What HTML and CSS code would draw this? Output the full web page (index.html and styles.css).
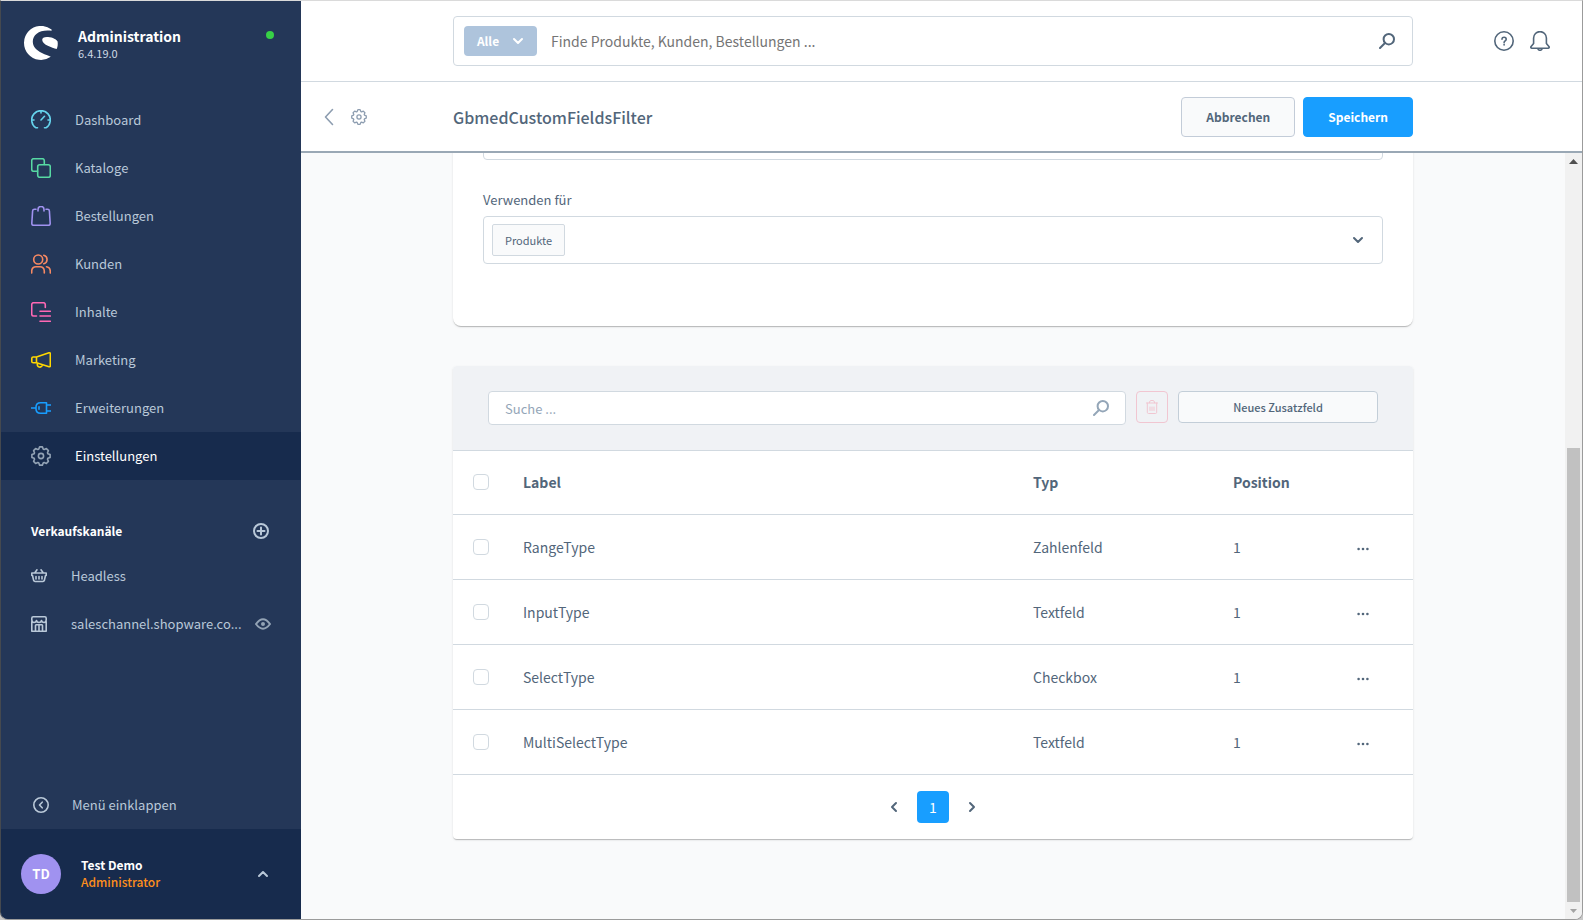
FILE: index.html
```html
<!DOCTYPE html>
<html lang="de">
<head>
<meta charset="utf-8">
<title>GbmedCustomFieldsFilter | Administration</title>
<link rel="stylesheet" href="styles.css">
</head>
<body>
<svg class="sprite" aria-hidden="true">
  <symbol id="gear" viewBox="0 0 20 20"><path d="M19.1 8.6V11.4L16.8 12.3 16.5 13.2 17.4 15.4 15.4 17.4 13.2 16.5 12.3 16.8 11.4 19.1H8.6L7.7 16.8 6.8 16.5 4.6 17.4 2.6 15.4 3.5 13.2 3.2 12.3.9 11.4V8.6L3.2 7.7 3.5 6.8 2.6 4.6 4.6 2.6 6.8 3.5 7.7 3.2 8.6.9H11.4L12.3 3.2 13.2 3.5 15.4 2.6 17.4 4.6 16.5 6.8 16.8 7.7Z"/><circle cx="10" cy="10" r="2.6"/></symbol>
  <symbol id="search" viewBox="0 0 16 16"><circle cx="9.8" cy="6.2" r="5.2"/><path d="M6 10 1 15"/></symbol>
  <symbol id="down" viewBox="0 0 12 8"><path d="M2 2 6 6 10 2"/></symbol>
  <symbol id="dots" viewBox="0 0 12 4"><circle cx="1.6" cy="2" r="1.3"/><circle cx="6" cy="2" r="1.3"/><circle cx="10.4" cy="2" r="1.3"/></symbol>
</svg>
<div class="window">
  <aside class="sidebar">
    <header class="brand">
      <svg class="logo" viewBox="0 0 34 34"><path d="M27.6 3.6A17 17 0 1 0 26.8 30.8C22 28.4 8.8 25.500 8.800 15.500C8.800 8.500 16 3.200 27.600 4.800Z"/><path d="M18.200 14C18 11.800 20.500 10.700 24 11C29 11.400 32.500 13.500 33.600 15.500C34 18 33.700 21 32.700 23C28 21.500 18.600 19 18.200 14Z"/></svg>
      <div class="brand-text"><strong>Administration</strong><span>6.4.19.0</span></div>
      <i class="status"></i>
    </header>
    <nav class="menu">
      <a href="#"><svg class="icon cyan" viewBox="0 0 20 20"><path d="M6.500 17.800H5A9.300 9.300 0 1 1 15 17.800H13.500M10 .7V3M.7 10H3M17 10H19.300M10 10 13.500 6.300"/></svg>Dashboard</a>
      <a href="#"><svg class="icon green" viewBox="0 0 20 20"><rect x="6.700" y="6.700" width="12.600" height="12.600" rx="2"/><path d="M6.500 13.300H2.700a2 2 0 0 1-2-2V2.700a2 2 0 0 1 2-2H11.300a2 2 0 0 1 2 2V6.500"/></svg>Kataloge</a>
      <a href="#"><svg class="icon violet" viewBox="0 0 20 20"><path d="M7 5V3.500a3 3 0 0 1 6 0V5M5 3.300H3.500Q1.700 3.300 1.600 5L.8 17.500Q.8 19.300 2.600 19.300H17.400Q19.200 19.300 19.200 17.500L18.400 5Q18.300 3.300 16.500 3.300H15"/></svg>Bestellungen</a>
      <a href="#"><svg class="icon orange" viewBox="0 0 20 20"><circle cx="7.200" cy="5.500" r="4.500"/><path d="M12.800 1.200A4.400 4.400 0 0 1 12.800 9.700M.7 19V17Q1 12.700 5 12.700H9Q13 12.700 13.300 17V19M15.500 12.700Q19 13.200 19.300 17V19"/></svg>Kunden</a>
      <a href="#"><svg class="icon pink" viewBox="0 0 20 20"><path d="M5.500 14H2.700a2 2 0 0 1-2-2V2.700a2 2 0 0 1 2-2H12.300a2 2 0 0 1 2 2V5.500M9 9.200H19.300M9 14H19.300M9 19.200H19.300"/></svg>Inhalte</a>
      <a href="#"><svg class="icon yellow" viewBox="0 0 20 20"><path d="M5.500 7 18 2.800Q19.300 2.500 19.300 3.800V15.800Q19.300 17 18 16.700L5.500 12.800ZM5.500 7H2.200Q.8 7 .8 8.300V11.500Q.8 12.800 2.200 12.800H5.500M6.500 13.200C5.300 17.500 10.500 18.500 11.500 14.800"/></svg>Marketing</a>
      <a href="#"><svg class="icon blue" viewBox="0 0 20 20"><path d="M.5 10H5M9.500 4.700H15.500V15.300H9.500Q5 15.300 5 10.800V9.200Q5 4.700 9.500 4.700ZM15.500 7H19.500M15.500 13H19.500M8 8.700V11.300"/></svg>Erweiterungen</a>
      <a href="#" class="active"><svg class="icon steel"><use href="#gear"/></svg>Einstellungen</a>
    </nav>
    <section class="channels">
      <div class="channels-head"><h2>Verkaufskanäle</h2>
        <button type="button" aria-label="Verkaufskanal hinzufügen"><svg class="icon-sm bold" viewBox="0 0 16 16"><circle cx="8" cy="8" r="7"/><path d="M8 4.500V11.500M4.500 8H11.500"/></svg></button></div>
      <a href="#"><svg class="icon-sm" viewBox="0 0 16 16"><path d="M.8 5H15.200V7.500H14.500L13.300 12.600Q13 13.500 12 13.500H4Q3 13.500 2.700 12.600L1.500 7.500H.8ZM4 4.500 6 1.800M12 4.500 10 1.800M5 8.500V11M8 8.500V11M11 8.500V11"/></svg><span>Headless</span></a>
      <a href="#"><svg class="icon-sm" viewBox="0 0 16 16"><path d="M.8 4V2.200Q.8.8 2.200.8H13.800Q15.200.8 15.200 2.200V4Q15 6.500 13 6.500 11 6.500 10.500 4.500 10 6.500 8 6.500 6 6.500 5.500 4.500 5 6.500 3 6.500 1 6.500.8 4ZM.8 5.500V15.200H15.200V5.500M4.500 15V9.500Q4.500 8.800 5.200 8.800H10.800Q11.500 8.800 11.500 9.500V15M8 9V15"/></svg><span>saleschannel.shopware.co...</span><svg class="eye" viewBox="0 0 16 12"><path d="M1 6Q8-3.500 15 6Q8 15.500 1 6Z"/><circle cx="8" cy="6" r="1"/></svg></a>
    </section>
    <button type="button" class="collapse"><svg class="icon-sm" viewBox="0 0 16 16"><circle cx="8" cy="8" r="7.200"/><path d="M9.200 5.200 6.500 8 9.200 10.800"/></svg>Menü einklappen</button>
    <footer class="user">
      <span class="avatar">TD</span>
      <div class="user-text"><strong>Test Demo</strong><span>Administrator</span></div>
      <button type="button" aria-label="Benutzermenü"><svg class="chev" viewBox="0 0 12 8"><path d="M2 6 6 2 10 6"/></svg></button>
    </footer>
  </aside>

  <main class="main">
    <header class="topbar">
      <form class="global-search" role="search">
        <button type="button" class="scope">Alle <svg class="chev"><use href="#down"/></svg></button>
        <input type="text" aria-label="Suche" placeholder="Finde Produkte, Kunden, Bestellungen ...">
        <svg class="mag"><use href="#search"/></svg>
      </form>
      <div class="top-actions">
        <button type="button" aria-label="Hilfe"><svg class="icon" viewBox="0 0 20 20"><circle cx="10" cy="10" r="9.200"/><path d="M8 8.200C8 5.500 12.200 5.700 12.200 8.200 12.200 9.900 10.100 9.700 10.100 11.500M10.100 13.400V14"/></svg></button>
        <button type="button" aria-label="Benachrichtigungen"><svg class="icon" viewBox="0 0 20 20"><path d="M3.600 12.500V7A6.400 6.400 0 0 1 16.400 7V12.500L18.900 15.500Q19.800 17 18 17.300H2Q.2 17 1.100 15.500ZM7.800 17.500Q8 19.300 10 19.300 12 19.300 12.200 17.500"/></svg></button>
      </div>
    </header>
    <div class="smartbar">
      <div class="back">
        <a href="#" aria-label="Zurück"><svg class="back-arrow" viewBox="0 0 10 18"><path d="M8.500 1.500 1.500 9 8.500 16.500"/></svg></a>
        <svg class="icon-sm"><use href="#gear"/></svg>
      </div>
      <div class="smartbar-body">
        <h1>GbmedCustomFieldsFilter</h1>
        <button type="button" class="btn">Abbrechen</button>
        <button type="button" class="btn primary">Speichern</button>
      </div>
    </div>
    <div class="scroll">
      <div class="view">
        <div class="content">
          <section class="card form-card">
            <input type="text" class="field" aria-label="Label">
            <label for="entity">Verwenden für</label>
            <div class="field multi">
              <button type="button" class="tag">Produkte</button>
              <input type="text" id="entity">
              <svg class="chev"><use href="#down"/></svg>
            </div>
          </section>
          <section class="card list-card">
            <div class="toolbar">
              <div class="list-search"><input type="text" aria-label="Zusatzfeld suchen" placeholder="Suche ..."><svg class="mag"><use href="#search"/></svg></div>
              <button type="button" class="trash" aria-label="Löschen"><svg viewBox="0 0 12 14"><path d="M.5 3H11.500M1.300 3V12.300Q1.300 13.500 2.500 13.500H9.500Q10.700 13.500 10.700 12.300V3M3.300 2.800Q3.500.5 5 .5H7Q8.500.5 8.700 2.800M4 7V10.500M6 7V10.500M8 7V10.500"/></svg></button>
              <button type="button" class="new-field">Neues Zusatzfeld</button>
            </div>
            <table>
              <thead><tr><th class="check"><input type="checkbox" aria-label="Alle auswählen"></th><th>Label</th><th class="type">Typ</th><th class="pos">Position</th><th class="act"></th></tr></thead>
              <tbody>
                <tr><td><input type="checkbox" aria-label="RangeType"></td><td>RangeType</td><td>Zahlenfeld</td><td>1</td><td class="act"><button type="button" aria-label="Aktionen"><svg><use href="#dots"/></svg></button></td></tr>
                <tr><td><input type="checkbox" aria-label="InputType"></td><td>InputType</td><td>Textfeld</td><td>1</td><td class="act"><button type="button" aria-label="Aktionen"><svg><use href="#dots"/></svg></button></td></tr>
                <tr><td><input type="checkbox" aria-label="SelectType"></td><td>SelectType</td><td>Checkbox</td><td>1</td><td class="act"><button type="button" aria-label="Aktionen"><svg><use href="#dots"/></svg></button></td></tr>
                <tr><td><input type="checkbox" aria-label="MultiSelectType"></td><td>MultiSelectType</td><td>Textfeld</td><td>1</td><td class="act"><button type="button" aria-label="Aktionen"><svg><use href="#dots"/></svg></button></td></tr>
              </tbody>
            </table>
            <nav class="pager">
              <button type="button" aria-label="Vorherige Seite"><svg viewBox="0 0 8 12"><path d="M6 2 2 6 6 10"/></svg></button>
              <button type="button" class="page">1</button>
              <button type="button" aria-label="Nächste Seite"><svg viewBox="0 0 8 12"><path d="M2 2 6 6 2 10"/></svg></button>
            </nav>
          </section>
        </div>
      </div>
      <div class="scrollbar" aria-hidden="true">
        <svg class="up" viewBox="0 0 17 17"><path d="M4 11 8.500 6 13 11Z"/></svg>
        <div class="track"><i class="thumb"></i></div>
        <svg class="dn" viewBox="0 0 17 17"><path d="M5 7 8.500 11 12 7Z"/></svg>
      </div>
    </div>
  </main>
</div>
</body>
</html>
```

FILE: styles.css
```css
* { box-sizing: border-box; }
body {
  margin: 0;
  background: #c8c8c8;
  color: #52667a;
  font: 13px/18px "Noto Sans CJK SC", "Noto Sans", sans-serif;
}
button, input { font: inherit; color: inherit; margin: 0; }
button { border: 0; padding: 0; background: none; display: flex; align-items: center; justify-content: center; }
input { outline: 0; }
a { color: inherit; text-decoration: none; }
h1, h2 { margin: 0; }
svg { display: block; flex: none; fill: none; stroke: currentColor; stroke-width: 1.6; stroke-linecap: round; stroke-linejoin: round; }
.sprite { position: absolute; width: 0; height: 0; }
.icon { width: 20px; height: 20px; }
.icon-sm { width: 16px; height: 16px; }
.bold { stroke-width: 2; }
.chev { width: 12px; height: 8px; stroke-width: 2; }
.mag { width: 16px; height: 16px; stroke-width: 2; }

.window {
  display: flex;
  height: 100vh;
  border: 1px solid #9b9b9b;
  border-top-color: #dadada;
  border-left-color: #45494f;
  border-radius: 0 0 8px 8px;
  overflow: hidden;
  background: #f9fafb;
}

.sidebar {
  display: flex;
  flex-direction: column;
  flex: none;
  width: 300px;
  background: #243758;
  color: #b9c8d8;
}
.brand { display: flex; gap: 20px; height: 95px; padding: 25px 27px 0 23px; }
.logo { width: 34px; height: 34px; fill: #fff; stroke: none; }
.brand-text { display: flex; flex-direction: column; flex: 1; padding-top: 1px; }
.brand-text strong { color: #fff; font-size: 14px; }
.brand-text span { font-size: 11px; line-height: 16px; color: #d0dae5; }
.status { width: 8px; height: 8px; margin-top: 5px; border-radius: 50%; background: #37d046; }
.menu a { display: flex; align-items: center; gap: 24px; height: 48px; padding-left: 30px; }
.menu .active { background: #172b4d; color: #fff; }
.cyan { color: #65d3ec; }
.green { color: #57d9a3; }
.violet { color: #a092f0; }
.orange { color: #f88962; }
.pink { color: #ff68b4; }
.yellow { color: #ffd700; }
.blue { color: #189eff; }
.steel { color: #93a3b5; }
.channels { padding: 30px 30px 0; }
.channels-head { display: flex; align-items: center; justify-content: space-between; height: 42px; padding-right: 2px; }
.channels h2 { color: #fff; font-size: 12px; line-height: 18px; }
.channels a { display: flex; align-items: center; gap: 24px; height: 48px; }
.channels span { flex: 1; min-width: 0; white-space: nowrap; }
.channels .eye { width: 16px; height: 12px; margin-left: -20px; color: #93a3b5; stroke-width: 2; }
.collapse { justify-content: flex-start; gap: 23px; height: 48px; margin-top: auto; padding-left: 32px; }
.user { display: flex; align-items: center; height: 90px; padding: 0 32px 0 20px; background: #172b4d; }
.avatar { width: 40px; height: 40px; border-radius: 50%; background: #a092f0; color: #fff; font-weight: 700; line-height: 40px; text-align: center; }
.user-text { display: flex; flex-direction: column; flex: 1; margin-left: 20px; padding-bottom: 2px; font-size: 12px; line-height: 17px; font-weight: 500; color: #ff8f1c; }
.user-text strong { color: #fff; font-weight: 700; }

.main { display: flex; flex-direction: column; flex: 1; min-width: 0; }
.topbar, .smartbar {
  display: grid;
  grid-template-columns: 1fr minmax(0, 960px) 1fr;
  align-items: center;
  flex: none;
  padding-right: 17px;
  background: #fff;
}
.topbar { height: 81px; border-bottom: 1px solid #d1d9e0; }
.global-search {
  grid-column: 2;
  display: flex;
  align-items: center;
  height: 50px;
  padding: 0 17px 0 10px;
  border: 1px solid #d1d9e0;
  border-radius: 4px;
}
.scope { gap: 13px; width: 73px; height: 30px; border-radius: 4px; background: #aec4dc; color: #fff; font-size: 12px; font-weight: 700; }
.global-search input { flex: 1; min-width: 0; height: 40px; padding: 0 14px; border: 0; font-size: 14px; }
.global-search input::placeholder { color: #757575; }
.top-actions { display: flex; justify-content: flex-end; gap: 16px; padding-right: 15px; }
.smartbar { height: 71px; border-bottom: 2px solid #9aa8b5; }
.back { display: flex; align-items: center; gap: 17px; padding-left: 23px; color: #8d9db0; }
.back-arrow { width: 10px; height: 18px; }
.smartbar-body { display: flex; align-items: center; gap: 8px; }
.smartbar h1 { flex: 1; font-size: 16px; line-height: 24px; font-weight: 500; }
.btn { height: 40px; padding: 0 24px; border: 1px solid #c3ccd8; border-radius: 4px; background: #f9fafb; font-size: 12px; font-weight: 700; }
.primary { border-color: #189eff; background: #189eff; color: #fff; }

.scroll { display: flex; flex: 1; min-height: 0; }
.view { flex: 1; min-width: 0; overflow: hidden; }
.content { width: 100%; max-width: 960px; margin: -41px auto 0; }
.card { background: #fff; box-shadow: 0 1px 1px rgba(0, 0, 0, .1), 0 2px 1px -1px rgba(0, 0, 0, .14), 0 1px 3px rgba(0, 0, 0, .08); }
.form-card { padding: 0 30px 62px; border-radius: 0 0 8px 8px; }
.field { display: block; width: 100%; height: 48px; border: 1px solid #d1d9e0; border-radius: 4px; background: #fff; }
.form-card label { display: block; margin: 31px 0 7px; line-height: 18px; }
.multi { display: flex; align-items: center; padding: 0 18px 0 8px; }
.multi input { flex: 1; min-width: 0; border: 0; }
.tag { height: 32px; padding: 0 12px; border: 1px solid #d1d9e0; border-radius: 2px; background: #f9fafb; font-size: 11px; }
.list-card { margin-top: 40px; border-radius: 4px; overflow: hidden; }
.toolbar { display: flex; gap: 10px; height: 85px; padding: 25px 35px; border-bottom: 1px solid #d1d9e0; background: #f0f2f5; }
.list-search { display: flex; align-items: center; flex: 1; height: 34px; padding: 0 16px; border: 1px solid #d1d9e0; border-radius: 4px; background: #fff; color: #94a6b8; }
.list-search input { flex: 1; min-width: 0; height: 30px; padding: 0; border: 0; color: #52667a; }
.list-search input::placeholder { color: #94a6b8; }
.trash { width: 32px; height: 32px; border: 1px solid #f1c6d1; border-radius: 4px; color: #f1c6d1; }
.trash svg { width: 12px; height: 14px; stroke-width: 1; }
.new-field { width: 200px; height: 32px; border: 1px solid #c3ced8; border-radius: 4px; background: #f9fafb; font-size: 11px; font-weight: 500; }

table { width: 100%; border-collapse: collapse; table-layout: fixed; font-size: 14px; line-height: 20px; }
th, td { height: 65px; padding: 0 20px; border-bottom: 1px solid #d1d9e0; text-align: left; vertical-align: middle; }
th { height: 63px; }
th.check { width: 50px; }
.type { width: 200px; }
.pos, th.act { width: 100px; }
tr > :first-child { padding-right: 0; }
input[type="checkbox"] { display: block; appearance: none; width: 16px; height: 16px; border: 1px solid #d1d9e0; border-radius: 4px; background: #fff; }
.act button { width: 20px; height: 20px; margin: 4px auto 0; }
.act svg { width: 12px; height: 4px; fill: currentColor; stroke: none; }
.pager { display: flex; align-items: center; justify-content: center; gap: 19px; height: 64px; }
.pager svg { width: 8px; height: 12px; stroke-width: 2; }
.page { width: 32px; height: 32px; border-radius: 4px; background: #189eff; color: #fff; font-size: 14px; }

.scrollbar { display: flex; flex-direction: column; flex: none; width: 17px; background: #f1f1f1; }
.scrollbar svg { width: 17px; height: 17px; stroke: none; }
.up { fill: #505050; }
.dn { fill: #a3a3a3; }
.track { display: flex; flex-direction: column; justify-content: flex-end; flex: 1; padding: 0 2px; }
.thumb { height: 62%; background: #c1c1c1; }
```
